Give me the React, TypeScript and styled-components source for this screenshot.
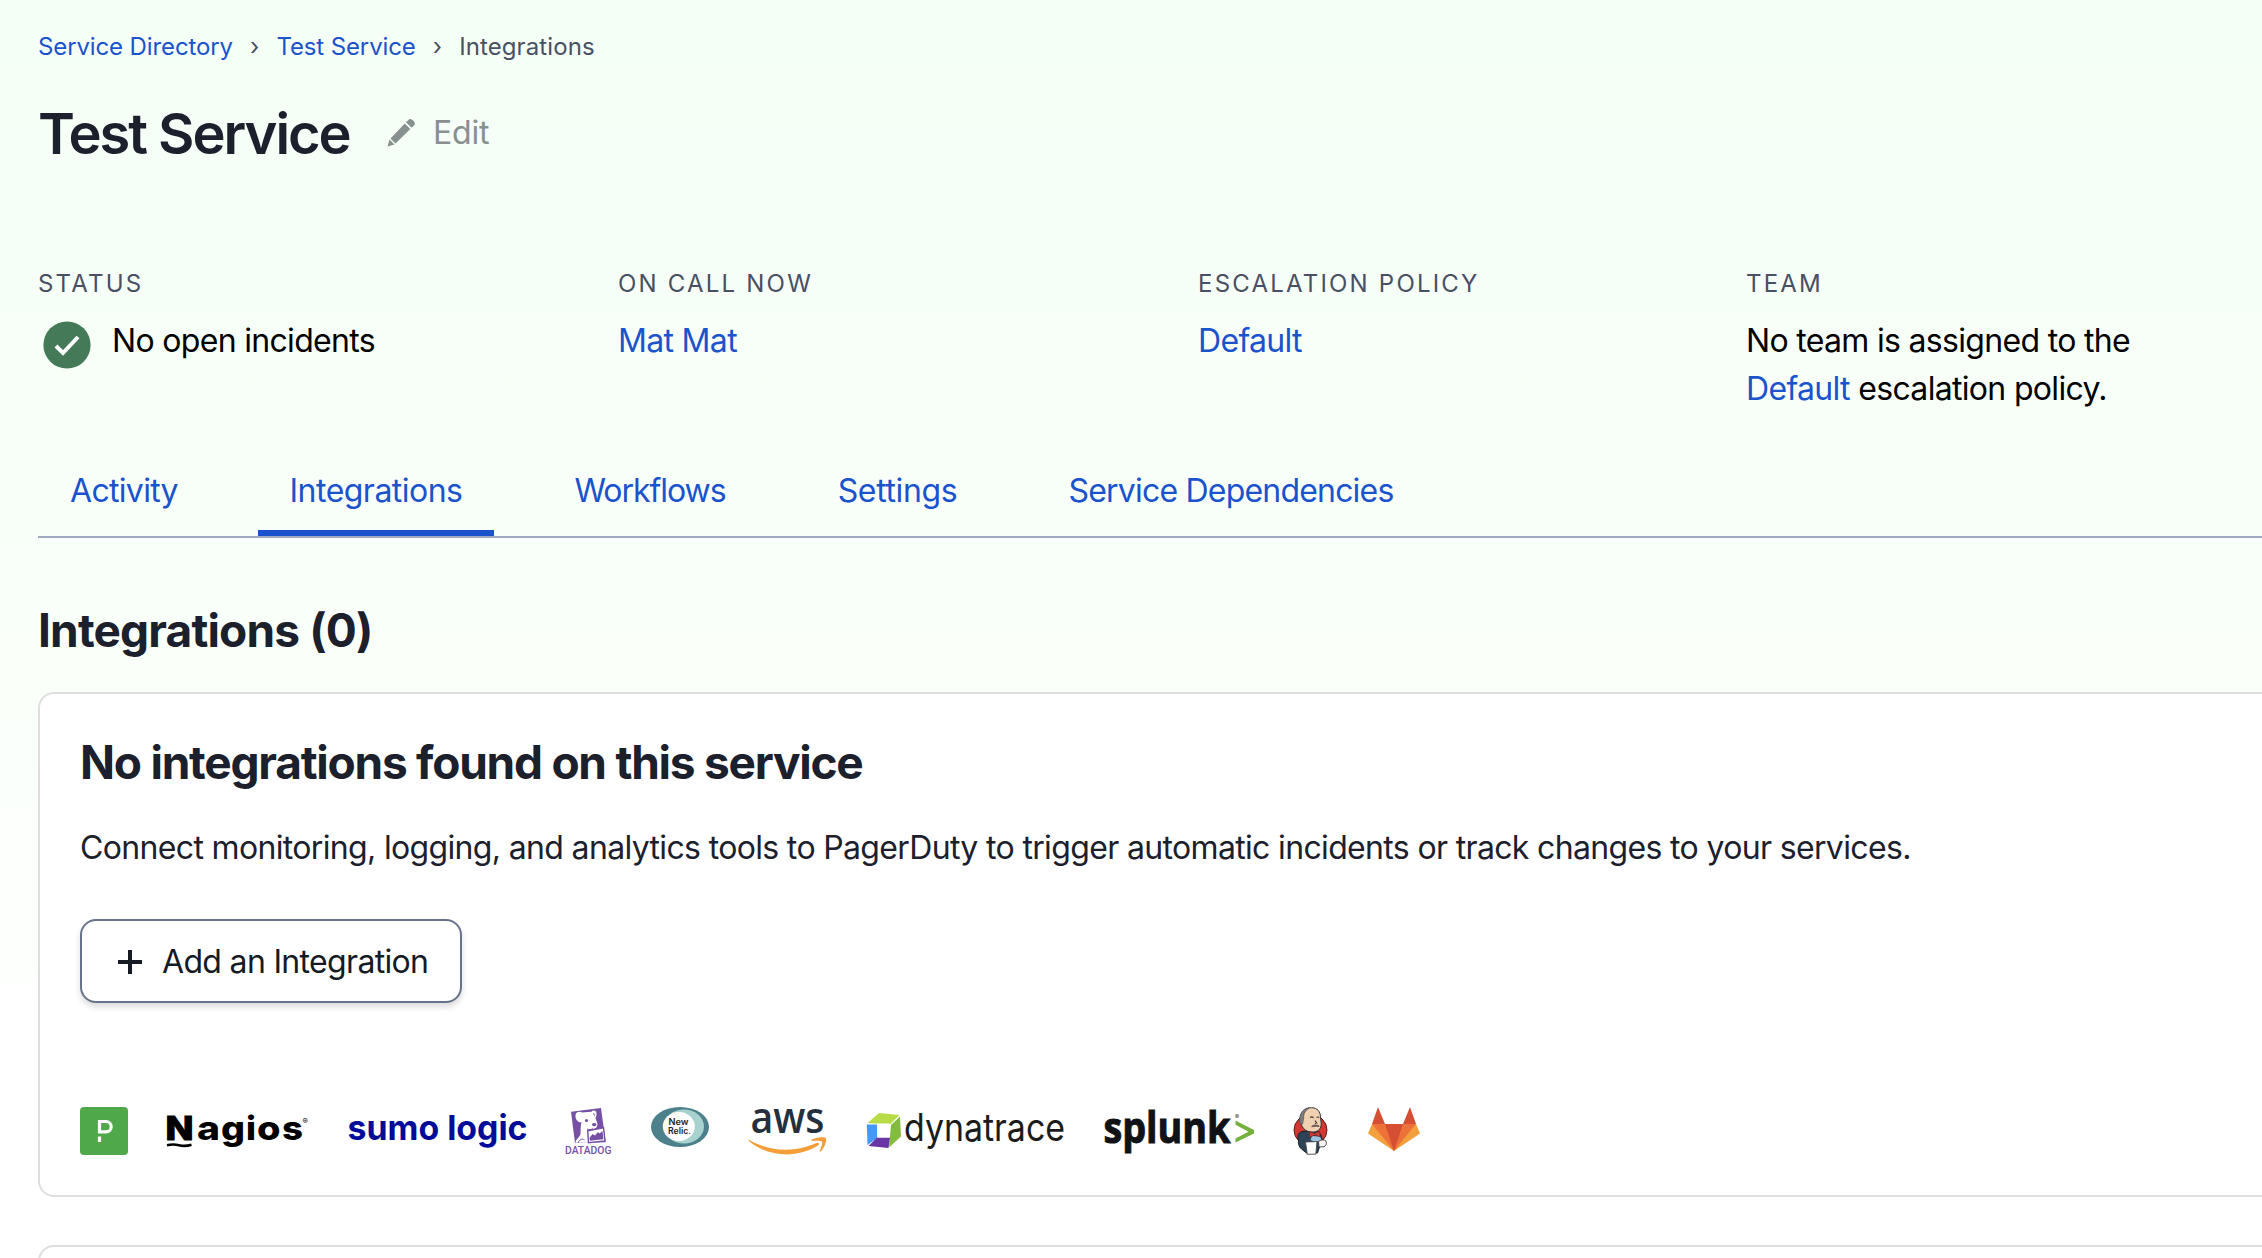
import React from 'react';
import styled, { createGlobalStyle } from 'styled-components';

const LINK = '#1b53cc';
const INK = '#1c202c';

const GlobalStyle = createGlobalStyle`
  *, *::before, *::after { box-sizing: border-box; }
  html { overflow: hidden; background: #fff; }
  body { margin: 0; font-family: Inter, Roboto, "Liberation Sans", sans-serif; color: #000; }
  h1, h2, h3, p { margin: 0; }
`;

const Page = styled.main`
  height: 1258px;
  overflow: hidden;
  padding: 28px 0 0 38px;
  background: linear-gradient(180deg, #f4fff6 0, #f8fff8 500px, #fff 1120px);
`;

const Breadcrumbs = styled.nav`
  display: flex;
  height: 36px;
  align-items: center;
  font-size: 24px;
  letter-spacing: -0.12px;
  color: #485063;
`;

const Separator = styled.span`
  width: 43.5px;
  text-align: center;
`;

const Current = styled.span`
  letter-spacing: 0.1px;
`;

const Link = styled.a`
  color: ${LINK};
  text-decoration: none;
`;

const TitleRow = styled.header`
  display: flex;
  align-items: center;
  height: 70px;
  margin-top: 36px;
`;

const Title = styled.h1`
  width: 349px;
  margin-bottom: 2px;
  font-size: 56px;
  line-height: 68px;
  font-weight: 600;
  letter-spacing: -2.05px;
  color: ${INK};
  white-space: nowrap;
`;

const EditButton = styled.button`
  display: flex;
  align-items: center;
  gap: 17px;
  margin-bottom: 5px;
  padding: 0;
  border: 0;
  background: none;
  font: 400 32px Inter, sans-serif;
  letter-spacing: -0.2px;
  color: #879190;
`;

const Facts = styled.section`
  display: grid;
  grid-template-columns: 580px 580px 548px 470px;
  margin-top: 96px;
  height: 194px;
  align-items: start;
`;

const FactLabel = styled.h3`
  font-size: 24px;
  line-height: 36px;
  font-weight: 400;
  letter-spacing: 2.2px;
  color: #485063;
`;

const FactValue = styled.div`
  display: flex;
  gap: 21px;
  margin-top: 15px;
  font-size: 32px;
  line-height: 48px;
  letter-spacing: -0.68px;
  white-space: nowrap;
`;

const StatusBadge = styled.svg`
  flex: none;
  margin: 4px 0 0 5px;
`;

const Tabs = styled.nav`
  display: flex;
  gap: 48px;
  height: 78px;
  border-bottom: 2px solid #9fabc0;
`;

const Tab = styled.a<{ $active?: boolean; $width: number; $tracking: number }>`
  width: ${p => p.$width}px;
  padding-top: 1px;
  text-align: center;
  font-size: 32px;
  line-height: 60px;
  letter-spacing: ${p => p.$tracking}px;
  white-space: nowrap;
  color: ${LINK};
  border-bottom: 6px solid ${p => (p.$active ? LINK : 'transparent')};
`;

const SectionTitle = styled.h2`
  margin-top: 63px;
  font-size: 46px;
  line-height: 58px;
  font-weight: 700;
  letter-spacing: -0.83px;
  color: ${INK};
`;

const CardTitle = styled(SectionTitle)`
  margin-top: 39px;
  letter-spacing: -1.23px;
`;

const Card = styled.section<{ $height: number; $top: number }>`
  height: ${p => p.$height}px;
  margin: ${p => p.$top}px -20px 0 0;
  padding: 0 40px;
  border: 2px solid #dedede;
  border-radius: 16px;
  background: #fff;
`;

const Blurb = styled.p`
  margin-top: 33px;
  font-size: 32px;
  line-height: 48px;
  letter-spacing: -0.655px;
  white-space: nowrap;
  color: ${INK};
`;

const AddButton = styled.button`
  display: flex;
  align-items: center;
  gap: 20px;
  width: 382px;
  height: 84px;
  margin-top: 47px;
  padding: 1px 0 0 36px;
  border: 2px solid #66738a;
  border-radius: 16px;
  background: #fff;
  box-shadow: 0 4px 6px rgba(0, 0, 0, 0.14);
  font: 400 32px Inter, sans-serif;
  letter-spacing: -0.67px;
  color: #161a25;
  white-space: nowrap;
`;

const LogoRow = styled.div`
  display: flex;
  gap: 38.8px;
  margin-top: 104px;
  height: 48px;
`;

const Logo = styled.svg`
  flex: none;
  display: block;
  overflow: visible;
`;

const PagerDutyLogo = () => (
  <Logo width="48" height="48">
    <rect width="48" height="48" rx="4" fill="#4fa94a" />
    <path d="M19.500 26.500V14.500h6.500a5 5 0 0 1 0 10.400h-8" fill="none" stroke="#fff" strokeWidth="3.200" />
    <rect x="17.900" y="29.500" width="3.200" height="5.500" fill="#fff" />
  </Logo>
);

const NagiosLogo = () => (
  <Logo width="142" height="48">
    <g fontFamily="Inter, sans-serif" fontWeight="800" fill="#000">
      <text x="-1.500" y="32.500" fontSize="33" textLength="28" lengthAdjust="spacingAndGlyphs" stroke="#000" strokeWidth="1">N</text>
      <text x="30" y="32.500" fontSize="33.500" textLength="23" lengthAdjust="spacingAndGlyphs">a</text>
      <text x="54" y="32.500" fontSize="33.500" textLength="24" lengthAdjust="spacingAndGlyphs">g</text>
      <text x="79" y="32.500" fontSize="33.500" textLength="10" lengthAdjust="spacingAndGlyphs">i</text>
      <text x="90" y="32.500" fontSize="33.500" textLength="23.500" lengthAdjust="spacingAndGlyphs">o</text>
      <text x="115" y="32.500" fontSize="33.500" textLength="21" lengthAdjust="spacingAndGlyphs">s</text>
      <text x="135.500" y="17" fontSize="8" fontWeight="500">®</text>
    </g>
    <path d="M0 38.200q6-1.500 12 0t12.500-.5" fill="none" stroke="#000" strokeWidth="2.600" />
  </Logo>
);

const SumoLogo = () => (
  <Logo width="179" height="48">
    <text x="-.5" y="32.500" fontFamily="Inter, sans-serif" fontWeight="700" fontSize="34.500" textLength="180" lengthAdjust="spacingAndGlyphs" fill="#000b99">sumo logic</text>
  </Logo>
);

const DatadogLogo = () => (
  <Logo width="47" height="48">
    <path d="M6 4.700 36 1l4.700 34.300L10 36z" fill="#7650a4" />
    <path d="M10.500 8c.5-3 4-4 6.500-2.500l9.500-.7c1-2 4-1.500 4.700.2.600 2 .3 4.300-.7 6l2 6c0 3-2 5-5 5l-5 1.700 1 12H10.500c0-4 4.500-5 5-9 .3-4-.2-7.500 1-11.500-3 .8-6.500-2.500-6-7.200z" fill="#fff" />
    <path d="M28 6.500c1.200-.8 2 .5 1.600 3z" fill="#7650a4" />
    <circle cx="21.500" cy="13.500" r="1.600" fill="#7650a4" />
    <ellipse cx="29.200" cy="17.600" rx="2.300" ry="1.700" fill="#7650a4" />
    <path d="M22 22c2 1 4 .8 6-.3M13 36c1-3 4-5 6.500-3" fill="none" stroke="#7650a4" strokeWidth="1" />
    <path d="m22.700 23.700 15.800-3 1.500 13.300-16.500 1.700z" fill="#fff" stroke="#7650a4" strokeWidth="1.400" />
    <path d="m24.500 31 3-4 2.500 1.500 3-3.500 1.500 1.500 3-2.500.9 8.300-13.400 1.500z" fill="#7650a4" />
    <text x="0" y="47" fontFamily="Roboto, sans-serif" fontWeight="500" fontSize="10.300" textLength="46.500" lengthAdjust="spacingAndGlyphs" fill="#7650a4">DATADOG</text>
  </Logo>
);

const NewRelicLogo = () => (
  <Logo width="58" height="48">
    <ellipse cx="29" cy="20" rx="29" ry="20" fill="#4c818c" />
    <ellipse cx="33" cy="19.500" rx="20" ry="17" fill="#a8d2ce" />
    <ellipse cx="27.800" cy="19.500" rx="16" ry="14.500" fill="#fff" />
    <g fontFamily="Inter, sans-serif" fontWeight="600" fontSize="8.300" fill="#222">
      <text x="17.500" y="17.500" textLength="20" lengthAdjust="spacingAndGlyphs">New</text>
      <text x="17" y="27.300" textLength="23" lengthAdjust="spacingAndGlyphs">Relic.</text>
    </g>
  </Logo>
);

const AwsLogo = () => (
  <Logo width="79" height="48">
    <text x="2.500" y="25.500" fontFamily="Open Sans, sans-serif" fontWeight="600" fontSize="43" textLength="74" lengthAdjust="spacingAndGlyphs" fill="#252f3e">aws</text>
    <path d="M.5 32.500c24 14 48 12 68 3.500 2-.8 3.500 1 1.500 2.500C50.500 51 20.500 51 .9 34Z" fill="#f59d38" />
    <path d="M63.500 32.800c4-2.800 13-3.300 14.500-1.500 1 2-1.500 9.500-5 13-1 .8-1.600.3-1.200-.7 1.200-3 3.200-7.800 2.200-9-1-1.100-6-.9-9.500-.6-1 .1-1.800-.5-1-1.200Z" fill="#f59d38" />
  </Logo>
);

const DynatraceLogo = () => (
  <Logo width="199" height="48">
    <path d="M1.500 16 13 6l20.500 2-9.500 9.500z" fill="#b8dc45" />
    <path d="m25 18 9-8.500 1 20L23 40.500z" fill="#82bd41" />
    <path d="M.8 17.500h10.200v13.500L1.500 38z" fill="#4398f8" />
    <path d="m11 30.500h13l-1.500 10.500-20-2z" fill="#6a35a5" />
    <rect x="11" y="16.500" width="13" height="14" rx="1" fill="#fff" />
    <text x="38" y="34" fontFamily="Inter, sans-serif" fontWeight="400" fontSize="38" textLength="161" lengthAdjust="spacingAndGlyphs" fill="#1b1b1b">dynatrace</text>
  </Logo>
);

const SplunkLogo = () => (
  <Logo width="151" height="48">
    <text x="-.5" y="35.700" fontFamily="Open Sans, sans-serif" fontWeight="700" fontSize="42.500" textLength="127" lengthAdjust="spacingAndGlyphs" stroke="#101215" strokeWidth="1" fill="#101215">splunk</text>
    <text x="131" y="12" fontFamily="Inter, sans-serif" fontSize="6" fill="#333">®</text>
    <path d="m131.500 13.500 18.500 9.500v3.500L131.500 35.500v-4l13-6.700-13-7z" fill="#76b03f" />
  </Logo>
);

const JenkinsLogo = () => (
  <Logo width="36" height="48">
    <ellipse cx="17.500" cy="23" rx="16.500" ry="15.500" fill="#d33833" stroke="#5a1c1a" />
    <path d="M9 24.500C4.500 26 4.500 29 5.500 33c-.5 3 .3 7 3 9l5 4h11l2-6 4-4-3-9-4-3.500z" fill="#2c4358" stroke="#17212b" />
    <path d="M7 13C7 5 12 .7 18.500.7c6 0 9 4.300 9 9.500.3 4 1.200 6.500.3 9.500-1 4-5 5.500-8.800 5.300C12 25 8 20 7 13z" fill="#efd1b2" stroke="#32302f" />
    <path d="M7 17C5.500 8 9 1.500 16 .9c-3 2.500-5 4.500-5.300 8.100.3 3-.7 4-1 8z" fill="#7c7d80" stroke="#444" strokeWidth=".6" />
    <path d="M17 10.500q2-1.500 3.500.3M23.500 10.500q1.700-1.200 2.700.3M22 13.500l1.700 2.500-1.700.5" fill="none" stroke="#4a3a30" strokeWidth="1.100" />
    <path d="M18.500 19q3.500-2.500 7.500-.7l.5 1.700q-3.500-.7-8 .2z" fill="#6d5e57" />
    <path d="m19 29 8 .5 1.500 3.500-6 2-5-2z" fill="#9fc3dc" />
    <path d="m16.500 24.500 5 2 5-2.200.7 5.500-5.500-1.800-5 2.300z" fill="#d33833" stroke="#6a1f1d" strokeWidth=".6" />
    <path d="M25.500 34.500c2-2 6-2 7.500-.5 1 2 0 5-2 5.700l-5 .3z" fill="#f6f3f0" stroke="#444" strokeWidth=".9" />
    <path d="m12.500 35 11.500-.4-1.200 12.600h-8.500z" fill="#fff" stroke="#444" strokeWidth=".9" />
  </Logo>
);

const GitlabLogo = () => (
  <Logo width="52" height="48">
    <path d="M0 26.500 4 17h44l4 9.500L26 44z" fill="#f2a03d" />
    <path d="M4 17h44L26 44z" fill="#ed7239" />
    <path d="M4 17 10 0l7 17zM35 17l7-17 6 17zM17 17h18l-9 27z" fill="#d44f33" />
  </Logo>
);

const tabs = [
  { label: 'Activity', width: 172, tracking: -0.7 },
  { label: 'Integrations', width: 236, tracking: -0.52, active: true },
  { label: 'Workflows', width: 216, tracking: -1.05 },
  { label: 'Settings', width: 183, tracking: -0.35 },
  { label: 'Service Dependencies', width: 388, tracking: -0.8 },
];

export default function App() {
  return (
    <Page>
      <GlobalStyle />
      <Breadcrumbs>
        <Link>Service Directory</Link>
        <Separator>›</Separator>
        <Link>Test Service</Link>
        <Separator>›</Separator>
        <Current>Integrations</Current>
      </Breadcrumbs>
      <TitleRow>
        <Title>Test Service</Title>
        <EditButton>
          <svg width="29" height="29" viewBox="0 0 29 29" fill="#879190">
            <path d="m.5 28.500 2-7 5 5zM3.500 20.500 17.800 5.500l5.500 5.500L8.500 25.500zM19 4.300 22 1.500c2-1.800 7.300 3 5.500 5.500L24.500 9.800z" />
          </svg>
          Edit
        </EditButton>
      </TitleRow>
      <Facts>
        <div>
          <FactLabel>STATUS</FactLabel>
          <FactValue>
            <StatusBadge width="48" height="48">
              <circle cx="24" cy="24" r="23.600" fill="#457a58" />
              <path d="m13 25 7 7 15-16" fill="none" stroke="#fff" strokeWidth="4" />
            </StatusBadge>
            No open incidents
          </FactValue>
        </div>
        <div>
          <FactLabel>ON CALL NOW</FactLabel>
          <FactValue><Link>Mat Mat</Link></FactValue>
        </div>
        <div>
          <FactLabel>ESCALATION POLICY</FactLabel>
          <FactValue><Link>Default</Link></FactValue>
        </div>
        <div>
          <FactLabel>TEAM</FactLabel>
          <FactValue>
            <p>No team is assigned to the<br /><Link>Default</Link> escalation policy.</p>
          </FactValue>
        </div>
      </Facts>
      <Tabs>
        {tabs.map(t => (
          <Tab key={t.label} $width={t.width} $tracking={t.tracking} $active={t.active}>{t.label}</Tab>
        ))}
      </Tabs>
      <SectionTitle>Integrations (0)</SectionTitle>
      <Card $top={33} $height={505}>
        <CardTitle>No integrations found on this service</CardTitle>
        <Blurb>Connect monitoring, logging, and analytics tools to PagerDuty to trigger automatic incidents or track changes to your services.</Blurb>
        <AddButton>
          <svg width="24" height="24"><path d="M12 0v24M0 12h24" stroke="#161a25" strokeWidth="4" /></svg>
          Add an Integration
        </AddButton>
        <LogoRow>
          <PagerDutyLogo />
          <NagiosLogo />
          <SumoLogo />
          <DatadogLogo />
          <NewRelicLogo />
          <AwsLogo />
          <DynatraceLogo />
          <SplunkLogo />
          <JenkinsLogo />
          <GitlabLogo />
        </LogoRow>
      </Card>
      <Card $top={48} $height={100} />
    </Page>
  );
}
